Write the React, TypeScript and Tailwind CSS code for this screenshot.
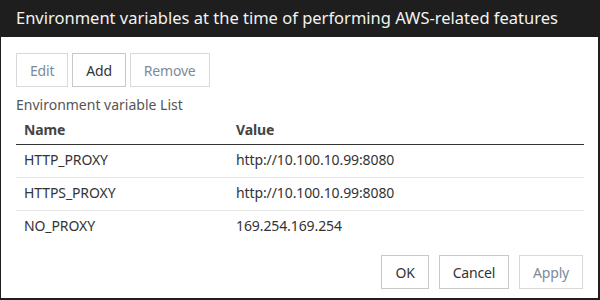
import { useState } from 'react';

type EnvVar = { name: string; value: string };

const envVars: EnvVar[] = [
  { name: 'HTTP_PROXY', value: 'http://10.100.10.99:8080' },
  { name: 'HTTPS_PROXY', value: 'http://10.100.10.99:8080' },
  { name: 'NO_PROXY', value: '169.254.169.254' },
];

function ToolButton({ label, disabled }: { label: string; disabled?: boolean }) {
  return (
    <button
      className={`h-[34px] border bg-white px-[13px] text-[14px] tracking-[-0.2px] ${
        disabled ? 'border-[#d9d9d9] text-[#7d8a9c]' : 'border-[#c8c8c8] text-[#333]'
      }`}
    >
      {label}
    </button>
  );
}

export default function App() {
  const [selected, setSelected] = useState<string | null>(null);

  return (
    <div className="h-[300px] w-[600px] bg-[#1e1e1e] p-[0_2px_2px_1px] font-['Noto_Sans','Open_Sans',sans-serif] text-[#333]">
      <div className="flex h-full flex-col">
        {/* Title */}
        <div className="flex h-[37px] items-center bg-[#1e1e1e] px-[15px] text-[16.5px] text-[#f2f2f2]">
          Environment variables at the time of performing AWS-related features
        </div>

        {/* Body */}
        <div className="flex flex-1 flex-col bg-white px-[15px] pt-[16px]">
          <div className="flex gap-[4px]">
            <ToolButton label="Edit" disabled />
            <ToolButton label="Add" />
            <ToolButton label="Remove" disabled />
          </div>

          <div className="mt-[7px] text-[14px] text-[#555]">Environment variable List</div>

          <table className="w-[568px] border-collapse text-[14px] tracking-[-0.1px]">
            <thead>
              <tr className="border-b-[1.5px] border-[#333]">
                <th className="h-[29px] w-[212px] pl-[8px] text-left font-bold text-[#444]">Name</th>
                <th className="h-[29px] pl-[8px] text-left font-bold text-[#444]">Value</th>
              </tr>
            </thead>
            <tbody>
              {envVars.map((v) => (
                <tr
                  key={v.name}
                  onClick={() => setSelected(v.name)}
                  className={`border-b border-[#e8e8e8] last:border-b-0 ${selected === v.name ? 'bg-[#eef4fb]' : ''}`}
                >
                  <td className="h-[33px] pb-[2px] pl-[8px]">{v.name}</td>
                  <td className="h-[33px] pb-[2px] pl-[8px]">{v.value}</td>
                </tr>
              ))}
            </tbody>
          </table>

          <div className="mt-auto mb-[9px] flex justify-end gap-[10px]">
            <ToolButton label="OK" />
            <ToolButton label="Cancel" />
            <ToolButton label="Apply" disabled />
          </div>
        </div>
      </div>
    </div>
  );
}
